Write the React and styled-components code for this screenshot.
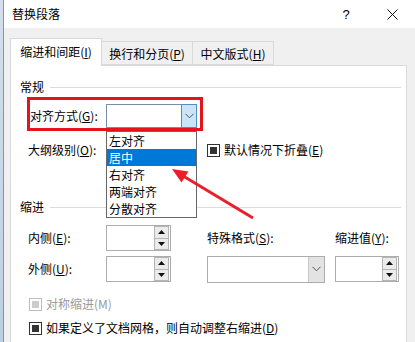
import React from 'react';
import styled, { createGlobalStyle } from 'styled-components';

const Global = createGlobalStyle`
  html, body { margin: 0; padding: 0; background: #f0f0f0; }
  body {
    font-family: "Noto Sans CJK SC", "Noto Sans", sans-serif;
    font-size: 12px;
    color: #000;
  }
  * { box-sizing: border-box; }
`;

const Screen = styled.div`
  position: relative;
  width: 415px;
  height: 342px;
  overflow: hidden;
  display: flex;
`;

const BackWindow = styled.div`
  flex: none;
  width: 3px;
  background: linear-gradient(#d3e0ec, #bccfe2);
`;

const Dialog = styled.div`
  flex: 1;
  min-width: 0;
  display: flex;
  flex-direction: column;
  border-left: 1px solid #8196ab;
  background: #f0f0f0;
`;

const TitleBar = styled.div`
  flex: none;
  height: 28px;
  background: #fff;
  display: flex;
  align-items: center;
  padding-left: 8px;
`;

const Title = styled.div`
  flex: 1;
  line-height: 16px;
`;

const TitleButton = styled.div`
  width: 46px;
  height: 28px;
  display: flex;
  align-items: center;
  justify-content: center;
  font-family: "Liberation Sans", sans-serif;
  font-size: 13px;
`;

const Body = styled.div`
  flex: 1;
  display: flex;
  flex-direction: column;
  padding: 10px 8px 0 6px;
`;

const Tabs = styled.div`
  display: flex;
  align-items: flex-end;
  height: 27px;
  position: relative;
  z-index: 1;
`;

const Tab = styled.div`
  width: ${p => p.$w}px;
  height: ${p => (p.$active ? 28 : 24)}px;
  margin-bottom: ${p => (p.$active ? -1 : 0)}px;
  margin-left: ${p => (p.$first ? 0 : -1)}px;
  background: ${p => (p.$active ? '#fff' : '#f0f0f0')};
  border: 1px solid #d9d9d9;
  border-bottom: ${p => (p.$active ? 'none' : '1px solid #d9d9d9')};
  position: relative;
  z-index: ${p => (p.$active ? 2 : 1)};
  display: flex;
  justify-content: center;
  padding-top: ${p => (p.$active ? 5 : 4)}px;
  line-height: 16px;
  white-space: nowrap;
`;

const Panel = styled.div`
  flex: 1;
  position: relative;
  background: #fff;
  border: 1px solid #d9d9d9;
  border-bottom: none;
  display: flex;
  flex-direction: column;
  padding-top: 13px;
`;

const SectionHeader = styled.div`
  display: flex;
  align-items: center;
  gap: 6px;
  margin: ${p => p.$mt || 0}px 5px 0 9px;
  line-height: 16px;
  &::after {
    content: '';
    flex: 1;
    height: 1px;
    background: #dcdcdc;
  }
`;

const U = styled.span`
  text-decoration: underline;
  text-underline-offset: 1px;
`;

const Label = styled.div`
  line-height: 16px;
  white-space: nowrap;
  color: ${p => (p.$disabled ? '#9a9a9a' : '#000')};
  width: ${p => (p.$w ? `${p.$w}px` : 'auto')};
`;

const RedBox = styled.div`
  position: relative;
  margin: 2px 0 0 16px;
  width: 176px;
  height: 34px;
  border: 3px solid #e3141c;
  display: flex;
  align-items: center;
  padding: 3px 3px 0 0;
`;

const Combo = styled.div`
  width: ${p => p.$w}px;
  height: ${p => p.$h || 24}px;
  display: flex;
  border: 1px solid ${p => (p.$open ? '#7a8ea3' : '#acacac')};
  background: #fff;
`;

const ComboField = styled.div`
  flex: 1;
`;

const ComboButton = styled.div`
  width: 16px;
  margin: ${p => (p.$open ? '-1px -1px -1px 0' : '0')};
  display: flex;
  align-items: center;
  justify-content: center;
  background: ${p => (p.$open ? '#cce4f7' : '#e3e3e3')};
  border: ${p => (p.$open ? '1px solid #4f8fc9' : 'none')};
  border-left: 1px solid ${p => (p.$open ? '#4f8fc9' : '#c8c8c8')};
`;

const DropList = styled.div`
  position: absolute;
  left: 76px;
  top: 31px;
  width: 91px;
  border: 1px solid #686868;
  background: #fff;
  z-index: 3;
`;

const DropItem = styled.div`
  height: 17px;
  line-height: 17px;
  padding-left: 2px;
  white-space: nowrap;
  background: ${p => (p.$selected ? '#0078d7' : 'transparent')};
  color: ${p => (p.$selected ? '#fff' : '#000')};
`;

const FormGrid = styled.div`
  display: grid;
  grid-template-columns: 78px 65px 36px 118px 10px 64px;
  grid-auto-rows: ${p => p.$row || 26}px;
  row-gap: 5px;
  align-items: center;
  margin-top: ${p => p.$mt || 0}px;
  padding-left: 17px;
`;

const Cell = styled.div`
  grid-column: ${p => p.$col} / span ${p => p.$span || 1};
  grid-row: ${p => p.$row};
  display: flex;
  align-items: center;
  gap: 4px;
`;

const SpinBox = styled.div`
  width: ${p => p.$w}px;
  height: 26px;
  border: 1px solid #acacac;
  background: #fff;
  display: flex;
  justify-content: flex-end;
  padding: 0 1px;
`;

const SpinButtons = styled.div`
  width: 15px;
  display: flex;
  flex-direction: column;
`;

const SpinButton = styled.div`
  flex: 1;
  display: flex;
  align-items: center;
  justify-content: center;
  background: #ebebeb;
  border: 1px solid #b5b5b5;
  & + & { border-top: none; }
`;

const CheckRow = styled.div`
  display: flex;
  align-items: center;
  gap: 4px;
  height: 16px;
  margin-top: ${p => p.$mt}px;
  padding-left: 18px;
`;

const CheckBox = styled.div`
  flex: none;
  width: 13px;
  height: 13px;
  border: 1px solid ${p => (p.$disabled ? '#bdbdbd' : '#333')};
  background: #fff;
  display: flex;
  align-items: center;
  justify-content: center;
  &::after {
    content: '';
    width: 7px;
    height: 7px;
    background: ${p => (p.$disabled ? '#cccccc' : '#333')};
  }
`;

const Overlay = styled.svg`
  position: absolute;
  left: 0;
  top: 0;
  pointer-events: none;
  z-index: 10;
`;

const Chevron = () => (
  <svg width="9" height="6" viewBox="0 0 9 6">
    <path d="M0.5 0.8 L4.5 4.8 L8.5 0.8" fill="none" stroke="#555" strokeWidth="1" />
  </svg>
);

const Tri = ({ up }) => (
  <svg width="7" height="4" viewBox="0 0 7 4">
    <path d={up ? 'M0 4 L3.5 0 L7 4 Z' : 'M0 0 L7 0 L3.5 4 Z'} fill="#111" />
  </svg>
);

const Spin = ({ w }) => (
  <SpinBox $w={w}>
    <SpinButtons>
      <SpinButton><Tri up /></SpinButton>
      <SpinButton><Tri /></SpinButton>
    </SpinButtons>
  </SpinBox>
);

const items = ['左对齐', '居中', '右对齐', '两端对齐', '分散对齐'];

export default function App() {
  return (
    <>
      <Global />
      <Screen>
        <BackWindow />
        <Dialog>
          <TitleBar>
            <Title>替换段落</Title>
            <TitleButton>?</TitleButton>
            <TitleButton>
              <svg width="11" height="11" viewBox="0 0 11 11">
                <path d="M0.5 0.5 L10.5 10.5 M10.5 0.5 L0.5 10.5" stroke="#111" strokeWidth="1" />
              </svg>
            </TitleButton>
          </TitleBar>
          <Body>
            <Tabs>
              <Tab $active $first $w={92}>缩进和间距(<U>I</U>)</Tab>
              <Tab $w={92}>换行和分页(<U>P</U>)</Tab>
              <Tab $w={82}>中文版式(<U>H</U>)</Tab>
            </Tabs>
            <Panel>
              <SectionHeader>常规</SectionHeader>
              <RedBox>
                <Label $w={76}>对齐方式(<U>G</U>):</Label>
                <Combo $w={91} $open>
                  <ComboField />
                  <ComboButton $open><Chevron /></ComboButton>
                </Combo>
                <DropList>
                  {items.map(t => (
                    <DropItem key={t} $selected={t === '居中'}>{t}</DropItem>
                  ))}
                </DropList>
              </RedBox>
              <FormGrid $mt={9} $row={20}>
                <Cell $col={1} $row={1} $span={2}>
                  <Label>大纲级别(<U>O</U>):</Label>
                </Cell>
                <Cell $col={4} $row={1} $span={3}>
                  <CheckBox />
                  <Label>默认情况下折叠(<U>E</U>)</Label>
                </Cell>
              </FormGrid>
              <SectionHeader $mt={39}>缩进</SectionHeader>
              <FormGrid $mt={10}>
                <Cell $col={1} $row={1}><Label>内侧(<U>E</U>):</Label></Cell>
                <Cell $col={2} $row={1}><Spin w={65} /></Cell>
                <Cell $col={4} $row={1}><Label>特殊格式(<U>S</U>):</Label></Cell>
                <Cell $col={6} $row={1}><Label>缩进值(<U>Y</U>):</Label></Cell>
                <Cell $col={1} $row={2}><Label>外侧(<U>U</U>):</Label></Cell>
                <Cell $col={2} $row={2}><Spin w={65} /></Cell>
                <Cell $col={4} $row={2}>
                  <Combo $w={118} $h={27}>
                    <ComboField />
                    <ComboButton><Chevron /></ComboButton>
                  </Combo>
                </Cell>
                <Cell $col={6} $row={2}><Spin w={64} /></Cell>
              </FormGrid>
              <CheckRow $mt={14}>
                <CheckBox $disabled />
                <Label $disabled>对称缩进(M)</Label>
              </CheckRow>
              <CheckRow $mt={8}>
                <CheckBox />
                <Label>如果定义了文档网格，则自动调整右缩进(<U>D</U>)</Label>
              </CheckRow>
            </Panel>
          </Body>
        </Dialog>
        <Overlay width="415" height="342" viewBox="0 0 415 342">
          <line x1="253" y1="218" x2="184" y2="176.5" stroke="#e8202a" strokeWidth="3" />
          <polygon points="172,169 188.5,171.5 181.5,182.5" fill="#e8202a" />
        </Overlay>
      </Screen>
    </>
  );
}
